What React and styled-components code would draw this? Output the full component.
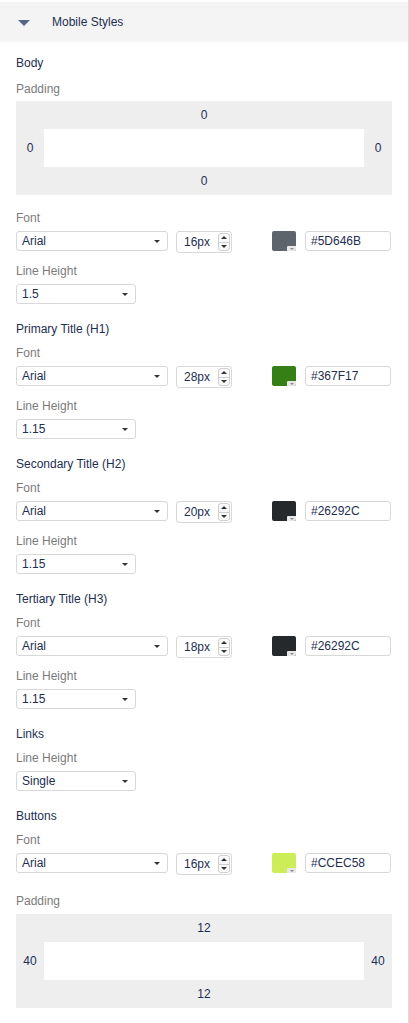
import React from 'react';
import styled, { createGlobalStyle } from 'styled-components';

const GlobalStyle = createGlobalStyle`
  html, body {
    margin: 0;
    padding: 0;
    background: #ffffff;
  }
  body {
    font-family: 'Liberation Sans', Arial, sans-serif;
  }
`;

const sections = [
  { title: 'Primary Title (H1)', size: '28px', color: '#367F17', lineHeight: '1.15' },
  { title: 'Secondary Title (H2)', size: '20px', color: '#26292C', lineHeight: '1.15' },
  { title: 'Tertiary Title (H3)', size: '18px', color: '#26292C', lineHeight: '1.15' },
];

const PaddingBox = ({ top, right, bottom, left }) => (
  <PadFrame>
    <PadValue>{top}</PadValue>
    <PadMiddle>
      <PadSide>{left}</PadSide>
      <PadInner />
      <PadSide>{right}</PadSide>
    </PadMiddle>
    <PadValue>{bottom}</PadValue>
  </PadFrame>
);

const Select = ({ value, wide }) => (
  <SelectBox wide={wide}>
    <span>{value}</span>
    <Caret />
  </SelectBox>
);

const FontRow = ({ size, color }) => (
  <Row>
    <Select value="Arial" wide />
    <NumberBox>
      <span>{size}</span>
      <Spinner>
        <SpinHalf><SpinUp /></SpinHalf>
        <SpinHalf bottom><SpinDown /></SpinHalf>
      </Spinner>
    </NumberBox>
    <Swatch color={color}>
      <SwatchCorner><SpinDown small /></SwatchCorner>
    </Swatch>
    <HexInput>{color.toUpperCase()}</HexInput>
  </Row>
);

const App = () => {
  return (
    <>
      <GlobalStyle />
      <Panel>
        <Header>
          <HeaderArrow />
          <HeaderTitle>Mobile Styles</HeaderTitle>
        </Header>
        <Content>
          <Section first>
            <Title gap="10px">Body</Title>
            <Label tight>Padding</Label>
            <PaddingBox top="0" right="0" bottom="0" left="0" />
            <Label spaced="15px">Font</Label>
            <FontRow size="16px" color="#5D646B" />
            <Label spaced="10px">Line Height</Label>
            <Select value="1.5" />
          </Section>

          {sections.map((s) => (
            <Section key={s.title}>
              <Title>{s.title}</Title>
              <Label>Font</Label>
              <FontRow size={s.size} color={s.color} />
              <Label spaced="10px">Line Height</Label>
              <Select value={s.lineHeight} />
            </Section>
          ))}

          <Section>
            <Title>Links</Title>
            <Label>Line Height</Label>
            <Select value="Single" />
          </Section>

          <Section>
            <Title>Buttons</Title>
            <Label>Font</Label>
            <FontRow size="16px" color="#CCEC58" />
            <Label spaced="18px">Padding</Label>
            <PaddingBox top="12" right="40" bottom="12" left="40" />
          </Section>
        </Content>
      </Panel>
    </>
  );
};

const Panel = styled.div`
  width: 409px;
  min-height: 1023px;
  box-sizing: border-box;
  padding-top: 2px;
  border-right: 1px solid #dcdcdc;
  background: #ffffff;
  color: #1d2e52;
  font-size: 12px;
`;

const Header = styled.div`
  height: 40px;
  background: #f4f4f4;
  display: flex;
  align-items: center;
  padding-left: 18px;
`;

const HeaderArrow = styled.span`
  width: 0;
  height: 0;
  border-left: 6px solid transparent;
  border-right: 6px solid transparent;
  border-top: 6px solid #56658a;
  margin-top: 1px;
`;

const HeaderTitle = styled.span`
  margin-left: 22px;
  font-size: 12px;
  color: #1d2e52;
`;

const Content = styled.div`
  padding: 0 16px;
`;

const Section = styled.div`
  display: flex;
  flex-direction: column;
  padding-top: ${(p) => (p.first ? '13px' : '17px')};
`;

const Title = styled.div`
  font-size: 12px;
  line-height: 16px;
  color: #1d2e52;
  margin-bottom: ${(p) => p.gap || '8px'};
`;

const Label = styled.div`
  font-size: 12px;
  line-height: 16px;
  color: #7b7b7b;
  margin-top: ${(p) => p.spaced || '0'};
  margin-bottom: ${(p) => (p.tight ? '4px' : '5px')};
`;

const PadFrame = styled.div`
  width: 376px;
  height: 94px;
  box-sizing: border-box;
  background: #eeeeee;
  display: flex;
  flex-direction: column;
`;

const PadValue = styled.div`
  height: 28px;
  display: flex;
  align-items: center;
  justify-content: center;
  font-size: 12px;
  color: #1d2e52;
`;

const PadMiddle = styled.div`
  height: 38px;
  display: flex;
`;

const PadSide = styled.div`
  width: 28px;
  display: flex;
  align-items: center;
  justify-content: center;
  font-size: 12px;
  color: #1d2e52;
`;

const PadInner = styled.div`
  flex: 1;
  background: #ffffff;
`;

const Row = styled.div`
  display: flex;
  align-items: flex-start;
  height: 22px;
`;

const SelectBox = styled.div`
  width: ${(p) => (p.wide ? '152px' : '120px')};
  height: 20px;
  box-sizing: border-box;
  border: 1px solid #d8d8d8;
  border-radius: 3px;
  background: #ffffff;
  display: flex;
  align-items: center;
  justify-content: space-between;
  padding: 0 7px 0 5px;
  font-size: 12px;
  color: #1d2e52;
`;

const Caret = styled.span`
  width: 0;
  height: 0;
  border-left: 3px solid transparent;
  border-right: 3px solid transparent;
  border-top: 3px solid #333333;
`;

const NumberBox = styled.div`
  width: 56px;
  height: 22px;
  margin-left: 8px;
  box-sizing: border-box;
  border: 1px solid #d8d8d8;
  border-radius: 3px;
  display: flex;
  align-items: center;
  justify-content: space-between;
  padding: 0 1px 0 7px;
  font-size: 12px;
  color: #1d2e52;
`;

const Spinner = styled.div`
  width: 12px;
  height: 18px;
  box-sizing: border-box;
  border: 1px solid #cfcfcf;
  border-radius: 3px;
  display: flex;
  flex-direction: column;
  background: #fafafa;
`;

const SpinHalf = styled.div`
  flex: 1;
  display: flex;
  align-items: center;
  justify-content: center;
  border-top: ${(p) => (p.bottom ? '1px solid #cfcfcf' : 'none')};
`;

const SpinUp = styled.span`
  width: 0;
  height: 0;
  border-left: 3px solid transparent;
  border-right: 3px solid transparent;
  border-bottom: 3px solid #333333;
`;

const SpinDown = styled.span`
  width: 0;
  height: 0;
  border-left: ${(p) => (p.small ? '2px' : '3px')} solid transparent;
  border-right: ${(p) => (p.small ? '2px' : '3px')} solid transparent;
  border-top: ${(p) => (p.small ? '2px' : '3px')} solid ${(p) => (p.small ? '#8a8a8a' : '#333333')};
`;

const Swatch = styled.div`
  width: 24px;
  height: 20px;
  margin-left: 40px;
  box-sizing: border-box;
  border-radius: 2px;
  background: ${(p) => p.color};
  position: relative;
`;

const SwatchCorner = styled.div`
  position: absolute;
  right: 0;
  bottom: 0;
  width: 9px;
  height: 5px;
  background: #e8e8e8;
  border-top-left-radius: 1px;
  border-bottom-right-radius: 2px;
  display: flex;
  align-items: center;
  justify-content: center;
`;

const HexInput = styled.div`
  width: 86px;
  height: 20px;
  margin-left: 9px;
  box-sizing: border-box;
  border: 1px solid #d8d8d8;
  border-radius: 3px;
  display: flex;
  align-items: center;
  padding-left: 5px;
  font-size: 12px;
  color: #1d2e52;
`;

export default App;
